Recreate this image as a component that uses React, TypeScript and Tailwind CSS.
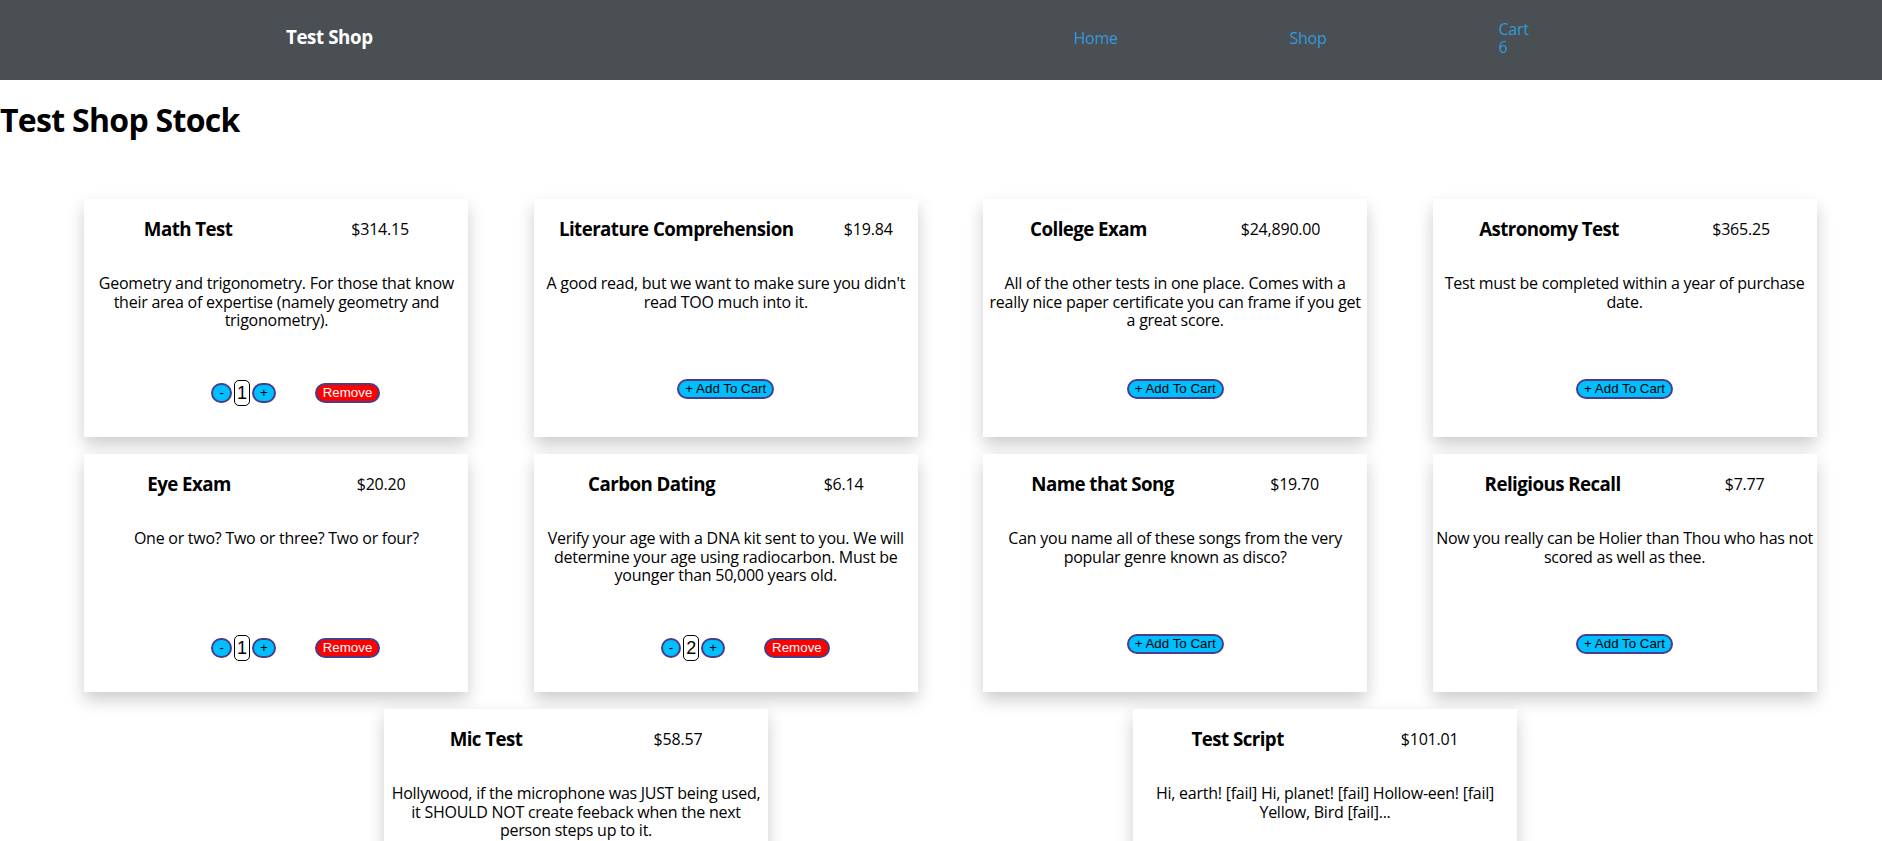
import React from "react";

type Product = {
  name: string;
  price: string;
  desc: string;
  qty?: number;
};

const products: Product[] = [
  {
    name: "Math Test",
    price: "$314.15",
    desc: "Geometry and trigonometry. For those that know their area of expertise (namely geometry and trigonometry).",
    qty: 1,
  },
  {
    name: "Literature Comprehension",
    price: "$19.84",
    desc: "A good read, but we want to make sure you didn't read TOO much into it.",
  },
  {
    name: "College Exam",
    price: "$24,890.00",
    desc: "All of the other tests in one place. Comes with a really nice paper certificate you can frame if you get a great score.",
  },
  {
    name: "Astronomy Test",
    price: "$365.25",
    desc: "Test must be completed within a year of purchase date.",
  },
  {
    name: "Eye Exam",
    price: "$20.20",
    desc: "One or two? Two or three? Two or four?",
    qty: 1,
  },
  {
    name: "Carbon Dating",
    price: "$6.14",
    desc: "Verify your age with a DNA kit sent to you. We will determine your age using radiocarbon. Must be younger than 50,000 years old.",
    qty: 2,
  },
  {
    name: "Name that Song",
    price: "$19.70",
    desc: "Can you name all of these songs from the very popular genre known as disco?",
  },
  {
    name: "Religious Recall",
    price: "$7.77",
    desc: "Now you really can be Holier than Thou who has not scored as well as thee.",
  },
  {
    name: "Mic Test",
    price: "$58.57",
    desc: "Hollywood, if the microphone was JUST being used, it SHOULD NOT create feeback when the next person steps up to it.",
  },
  {
    name: "Test Script",
    price: "$101.01",
    desc: "Hi, earth! [fail] Hi, planet! [fail] Hollow-een! [fail] Yellow, Bird [fail]...",
  },
];

function Card({ p }: { p: Product }) {
  return (
    <div className="w-[384px] h-[238px] bg-white shadow-[0_8px_16px_0_rgba(0,0,0,0.2)] flex flex-col text-black">
      <div className="flex justify-around items-center">
        <h3 className="my-[18.72px] text-[18.72px] leading-[22px] font-bold tracking-[-0.55px]">{p.name}</h3>
        <span className="text-[16px] leading-[18px] tracking-[-0.2px]">{p.price}</span>
      </div>
      <p className="mt-4 h-[103px] px-[2px] text-center text-[16px] leading-[18.4px] tracking-[-0.25px]">{p.desc}</p>
      {p.qty ? (
        <div className="flex justify-center items-center mt-[3px] text-[13.33px] font-['Liberation_Sans',Arial,sans-serif]">
          <div className="ml-[39px] flex items-center">
            <button className="px-[6px] py-[1px] leading-[14px] bg-[#00bfff] border-2 border-[#483d8b] rounded-full text-black">
              -
            </button>
            <span className="mx-[2px] w-[16px] h-[26px] border border-black rounded-[5px] flex items-center justify-center text-[18px] leading-none">
              {p.qty}
            </span>
            <button className="px-[6px] py-[1px] leading-[14px] bg-[#00bfff] border-2 border-[#483d8b] rounded-full text-black">
              +
            </button>
          </div>
          <button className="ml-[39px] px-[6px] py-[1px] leading-[14px] bg-[#ff0000] border-2 border-[#483d8b] rounded-full text-white">
            Remove
          </button>
        </div>
      ) : (
        <div className="flex justify-center mt-[2px] font-['Liberation_Sans',Arial,sans-serif]">
          <button className="px-[6px] py-[1px] text-[13.33px] leading-[14px] bg-[#00bfff] border-2 border-[#483d8b] rounded-full text-black">
            + Add To Cart
          </button>
        </div>
      )}
    </div>
  );
}

export default function App() {
  return (
    <div className="min-h-screen bg-white font-['Open_Sans',sans-serif] text-black">
      <header className="h-[80px] bg-[#4a4f54] flex items-center">
        <div className="ml-[286px] text-white font-bold text-[18.72px] leading-[22px] tracking-[-0.4px] -mt-[6px]">
          Test Shop
        </div>
        <nav className="ml-[701px] flex items-center text-[#3399dd] text-[16px] leading-[18.4px] tracking-[-0.3px] -mt-[4px]">
          <a className="w-[216px]">Home</a>
          <a className="w-[209px]">Shop</a>
          <a className="flex flex-col">
            <span>Cart</span>
            <span>6</span>
          </a>
        </nav>
      </header>
      <h1 className="my-[21.44px] text-[32px] leading-[37px] font-bold tracking-[-0.7px]">Test Shop Stock</h1>
      <div className="pl-[19px] pt-[39px] flex flex-wrap justify-evenly gap-y-[17px] pb-10">
        {products.map((p) => (
          <Card key={p.name} p={p} />
        ))}
      </div>
    </div>
  );
}
